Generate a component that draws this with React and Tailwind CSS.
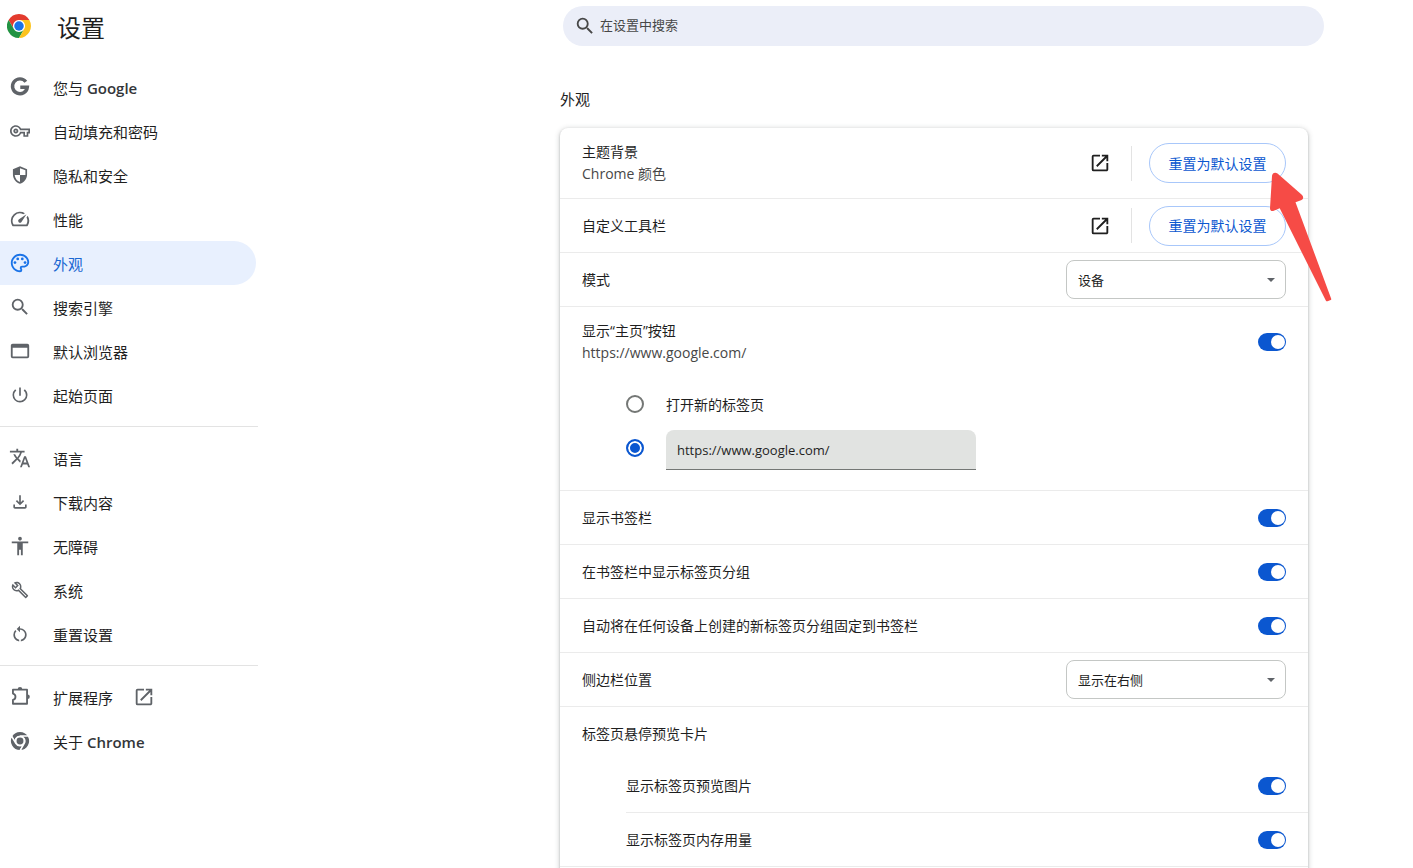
import React, { useState } from "react";
import {
  MdOutlineVpnKey,
  MdOutlineSpeed,
  MdOutlinePalette,
  MdSearch,
  MdPowerSettingsNew,
  MdTranslate,
  MdOutlineFileDownload,
  MdAccessibility,
  MdOutlineBuild,
  MdRestartAlt,
  MdOpenInNew,
} from "react-icons/md";

function GoogleIcon(props) {
  return (
    <svg viewBox="0 0 24 24" fill="none" stroke="currentColor" strokeWidth="3.7" {...props}>
      <path d="M18.4 6.3A8.1 8.1 0 1 0 20 12.2H12.3" />
    </svg>
  );
}

function ShieldIcon(props) {
  return (
    <svg viewBox="0 0 24 24" fill="currentColor" {...props}>
      <path
        fillRule="evenodd"
        d="M12 1.5 3.500 5v6c0 5.400 3.600 10.200 8.500 11.500 4.900-1.300 8.500-6.100 8.500-11.500V5L12 1.500Zm0 2.300L18.500 6.400V12H12v8.400C8.600 19.300 6 16 5.600 12H12Z"
      />
    </svg>
  );
}

function WindowIcon(props) {
  return (
    <svg viewBox="0 0 24 24" fill="currentColor" {...props}>
      <path
        fillRule="evenodd"
        d="M4 4h16a2 2 0 0 1 2 2v12a2 2 0 0 1-2 2H4a2 2 0 0 1-2-2V6c0-1.100.9-2 2-2Zm0 4.500V18h16V8.500Z"
      />
    </svg>
  );
}

function PuzzleIcon(props) {
  return (
    <svg viewBox="0 0 24 24" fill="none" stroke="currentColor" strokeWidth="2" strokeLinejoin="round" {...props}>
      <path d="M4.300 4H19.700V19.400H4.300V15.200A3.600 3.600 0 0 0 4.300 8.200Z" />
      <path fill="currentColor" stroke="none" d="M9.500 3.500a2.500 2.500 0 0 1 5 0ZM20.200 9.200a2.500 2.500 0 0 1 0 5Z" />
    </svg>
  );
}

const SEGMENTS = [
  "M24 12H44.780A24 24 0 0 0 3.210 12L13.600 30A12 12 0 0 1 24 12Z",
  "M13.600 30L3.210 12A24 24 0 0 0 24 48L34.400 30A12 12 0 0 1 13.600 30Z",
  "M34.400 30L24 48A24 24 0 0 0 44.780 12H24A12 12 0 0 1 34.400 30Z",
];

function ChromeLogo(props) {
  return (
    <svg viewBox="0 0 48 48" {...props}>
      <circle cx="24" cy="24" r="14" fill="#fff" />
      <path fill="#e33b2e" d={SEGMENTS[0]} />
      <path fill="#229342" d={SEGMENTS[1]} />
      <path fill="#fcc31e" d={SEGMENTS[2]} />
      <circle cx="24" cy="24" r="9.500" fill="#1a73e8" />
    </svg>
  );
}

function ChromeMono(props) {
  return (
    <svg viewBox="-3 -3 54 54" {...props}>
      <g fill="currentColor" stroke="#fff" strokeWidth="3.500">
        {SEGMENTS.map((d) => (
          <path key={d} d={d} />
        ))}
      </g>
      <circle cx="24" cy="24" r="8.500" fill="currentColor" />
    </svg>
  );
}

const NAV = [
  [
    { label: "您与", latin: "Google", Icon: GoogleIcon },
    { label: "自动填充和密码", Icon: MdOutlineVpnKey, inset: "p-px" },
    { label: "隐私和安全", Icon: ShieldIcon, inset: "p-px" },
    { label: "性能", Icon: MdOutlineSpeed },
    { label: "外观", Icon: MdOutlinePalette, active: true },
    { label: "搜索引擎", Icon: MdSearch },
    { label: "默认浏览器", Icon: WindowIcon },
    { label: "起始页面", Icon: MdPowerSettingsNew, inset: "p-px" },
  ],
  [
    { label: "语言", Icon: MdTranslate },
    { label: "下载内容", Icon: MdOutlineFileDownload, inset: "p-px" },
    { label: "无障碍", Icon: MdAccessibility },
    { label: "系统", Icon: MdOutlineBuild, inset: "p-[2px]" },
    { label: "重置设置", Icon: MdRestartAlt, inset: "p-px" },
  ],
  [
    { label: "扩展程序", Icon: PuzzleIcon, external: true },
    { label: "关于", latin: "Chrome", Icon: ChromeMono },
  ],
];

function Sidebar() {
  return (
    <nav className="w-[258px] text-[15px] text-[#1f1f1f]">
      {NAV.map((group, i) => (
        <ul key={i} className={i > 0 ? "mt-[9px] border-t border-[#e3e3e3] pt-[9px]" : ""}>
          {group.map(({ label, latin, Icon, inset = "", active, external }) => (
            <li key={label}>
              <a
                href="#"
                className={
                  active
                    ? "mr-[2px] flex h-11 items-center rounded-r-full bg-[#e8f0fe] pl-[9px] text-[#1967d2]"
                    : "mr-[2px] flex h-11 items-center pl-[9px]"
                }
              >
                <Icon
                  aria-hidden="true"
                  className={`size-[22px] shrink-0 ${inset} ${active ? "text-[#1a73e8]" : "text-[#5f6368]"}`}
                />
                <span className="ml-[22px] pt-0.5">
                  {label}
                  {latin && <span className="font-semibold text-[#333639]"> {latin}</span>}
                </span>
                {external && <MdOpenInNew aria-hidden="true" className="ml-5 size-[22px] text-[#5f6368]" />}
              </a>
            </li>
          ))}
        </ul>
      ))}
    </nav>
  );
}

function Toggle({ id }) {
  return (
    <input
      id={id}
      type="checkbox"
      role="switch"
      defaultChecked
      className="relative h-[18px] w-7 shrink-0 appearance-none rounded-full bg-[#747775] before:absolute before:top-0.5 before:left-[2px] before:size-3.5 before:rounded-full before:bg-white before:content-[''] checked:bg-[#0b57d0] checked:before:left-[13px]"
    />
  );
}

function ToggleRow({ id, label, className = "" }) {
  return (
    <div className={`flex h-[54px] items-center justify-between border-b border-[#ebebeb] pr-[22px] ${className}`}>
      <label htmlFor={id}>{label}</label>
      <Toggle id={id} />
    </div>
  );
}

function SelectRow({ id, label, options }) {
  return (
    <div className="flex h-[54px] items-center justify-between border-b border-[#ebebeb] px-[22px]">
      <label htmlFor={id}>{label}</label>
      <div className="relative">
        <select
          id={id}
          className="h-[39px] w-[220px] appearance-none rounded-lg border border-[#c4c7c5] bg-white pt-0.5 pl-[11px] text-[13px]"
        >
          {options.map((o) => (
            <option key={o}>{o}</option>
          ))}
        </select>
        <svg
          aria-hidden="true"
          viewBox="0 0 8 4"
          className="pointer-events-none absolute top-[18px] right-[11px] h-1 w-2 fill-[#5f6368]"
        >
          <path d="M0 0h8L4 4Z" />
        </svg>
      </div>
    </div>
  );
}

function ResetActions({ name }) {
  return (
    <div className="flex items-center">
      <button type="button" aria-label={`打开${name}`} className="text-[#1f1f1f]">
        <MdOpenInNew className="size-[22px]" />
      </button>
      <div className="ml-5 h-[35px] w-px bg-[#e3e3e3]" />
      <button
        type="button"
        className="ml-[17px] h-10 w-[137px] rounded-full border border-[#a8c7fa] text-[14px] text-[#0b57d0]"
      >
        重置为默认设置
      </button>
    </div>
  );
}

const RADIO =
  "size-[18px] shrink-0 appearance-none rounded-full border-2 border-[#747775] checked:border-[#0b57d0] checked:bg-[#0b57d0] checked:shadow-[inset_0_0_0_2px_#fff]";

function HomeButtonSection() {
  const [url, setUrl] = useState("https://www.google.com/");
  return (
    <section className="h-[184px] border-b border-[#ebebeb]">
      <div className="flex h-[70px] items-center justify-between px-[22px]">
        <label htmlFor="home" className="leading-[22px]">
          <span className="block">显示“主页”按钮</span>
          <span className="block text-[#474747]">https://www.google.com/</span>
        </label>
        <Toggle id="home" />
      </div>
      <div className="mt-[5px] pl-[66px]">
        <div className="flex h-11 items-center">
          <input type="radio" name="home-page" id="new-tab" className={RADIO} />
          <label htmlFor="new-tab" className="ml-[22px]">
            打开新的标签页
          </label>
        </div>
        <div className="flex h-11 items-center">
          <input type="radio" name="home-page" aria-label="自定义网址" defaultChecked className={RADIO} />
          <input
            type="text"
            aria-label="网址"
            value={url}
            onChange={(e) => setUrl(e.target.value)}
            className="mt-1 ml-[22px] h-10 w-[310px] rounded-t-lg border-b border-[#747775] bg-[#e1e3e1] px-[11px] text-[13px] outline-none"
          />
        </div>
      </div>
    </section>
  );
}

function PointerArrow() {
  return (
    <svg
      aria-hidden="true"
      viewBox="1268 170 66 134"
      className="pointer-events-none absolute top-[42px] -right-[26px] h-[134px] w-[66px]"
    >
      <path
        fill="#f64b46"
        d="M1272 176C1272.200 173 1275 171.800 1277.500 173.500L1301.500 194.500C1304 196.500 1303.500 199.500 1301 200.200L1295.500 202.200 1331.200 298.700C1331.400 299.300 1331.200 299.900 1330.700 300.100L1327.500 301.300C1326.800 301.500 1326.200 301.200 1325.800 300.500L1279.700 208.200 1273.800 210.800C1271.500 211.700 1270 210.500 1270 208.200Z"
      />
    </svg>
  );
}

export default function App() {
  return (
    <div className='h-screen overflow-hidden bg-white font-["Open_Sans","Noto_Sans_CJK_SC",sans-serif] text-[#1f1f1f]'>
      <header className="grid h-[52px] grid-cols-[563fr_minmax(0,761px)_89fr] items-center">
        <div className="flex items-center pl-[7px]">
          <ChromeLogo aria-hidden="true" className="size-6" />
          <h1 className="ml-[26px] pt-1 text-[24px] leading-8">设置</h1>
        </div>
        <label className="flex h-10 items-center rounded-full bg-[#ebeef8] pl-[11px]">
          <MdSearch aria-hidden="true" className="size-[22px] text-[#474747]" />
          <input
            type="search"
            aria-label="在设置中搜索"
            placeholder="在设置中搜索"
            className="ml-1 flex-1 bg-transparent text-[13px] outline-none placeholder:text-[#474747]"
          />
        </label>
      </header>
      <div className="grid grid-cols-[560fr_minmax(0,748px)_105fr]">
        <div className="pt-[13px]">
          <Sidebar />
        </div>
        <main className="pt-[35px] text-[14px]">
          <h2 className="text-[15px] leading-6">外观</h2>
          <div className="relative mt-[17px] rounded-lg bg-white pb-4 shadow-[0_1px_2px_rgba(60,64,67,0.3),0_1px_5px_1px_rgba(60,64,67,0.2)]">
            <div className="flex h-[71px] items-center justify-between border-b border-[#ebebeb] px-[22px]">
              <a href="#" className="leading-[22px]">
                <span className="block">主题背景</span>
                <span className="block text-[#474747]">Chrome 颜色</span>
              </a>
              <ResetActions name="主题背景" />
            </div>
            <div className="flex h-[54px] items-center justify-between border-b border-[#ebebeb] px-[22px]">
              <a href="#">自定义工具栏</a>
              <ResetActions name="自定义工具栏" />
            </div>
            <SelectRow id="mode" label="模式" options={["设备", "浅色", "深色"]} />
            <HomeButtonSection />
            <ToggleRow id="bookmarks" label="显示书签栏" className="pl-[22px]" />
            <ToggleRow id="groups" label="在书签栏中显示标签页分组" className="pl-[22px]" />
            <ToggleRow id="pin" label="自动将在任何设备上创建的新标签页分组固定到书签栏" className="pl-[22px]" />
            <SelectRow id="side" label="侧边栏位置" options={["显示在右侧", "显示在左侧"]} />
            <h3 className="flex h-[52px] items-center pl-[22px]">标签页悬停预览卡片</h3>
            <ToggleRow id="preview" label="显示标签页预览图片" className="ml-[66px]" />
            <ToggleRow id="memory" label="显示标签页内存用量" className="pl-[66px]" />
            <PointerArrow />
          </div>
        </main>
      </div>
    </div>
  );
}
